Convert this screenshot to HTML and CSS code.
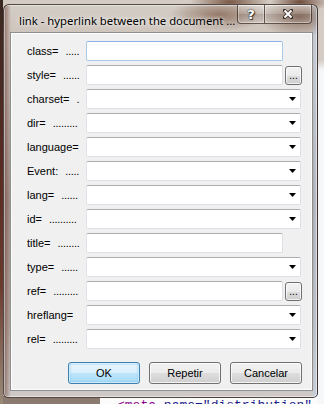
FILE: index.html
```html
<!DOCTYPE html>
<html lang="en">
<head>
    <meta charset="UTF-8">
    <title>link - hyperlink between the document</title>
    <link rel="stylesheet" href="styles.css">
</head>
<body>

<div class="window">
    <div class="titlebar">
        <span class="title">link - hyperlink between the document ...</span>
        <div class="caption-buttons">
            <span class="cap help">?</span>
            <span class="cap close">
                <svg width="10" height="10" viewBox="0 0 10 10">
                    <path d="M1.5 1.5 L8.5 8.5 M8.5 1.5 L1.5 8.5" stroke="#3a2f2a" stroke-width="3.6" stroke-linecap="square"/>
                    <path d="M1.5 1.5 L8.5 8.5 M8.5 1.5 L1.5 8.5" stroke="#fff" stroke-width="2"/>
                </svg>
            </span>
        </div>
    </div>

    <div class="client">
        <div class="form">
            <div class="row"><label>class=<span class="dots">.....</span></label><input class="field focused" type="text"></div>
            <div class="row"><label>style=<span class="dots">......</span></label><input class="field" type="text"><button class="browse">...</button></div>
            <div class="row"><label>charset=<span class="dots">.</span></label><div class="combo"><svg class="arrow" width="7" height="4"><path d="M0 0 H7 L3.5 4 Z" fill="#000"/></svg></div></div>
            <div class="row"><label>dir=<span class="dots">.........</span></label><div class="combo"><svg class="arrow" width="7" height="4"><path d="M0 0 H7 L3.5 4 Z" fill="#000"/></svg></div></div>
            <div class="row"><label>language=</label><div class="combo"><svg class="arrow" width="7" height="4"><path d="M0 0 H7 L3.5 4 Z" fill="#000"/></svg></div></div>
            <div class="row"><label>Event:<span class="dots">.....</span></label><div class="combo"><svg class="arrow" width="7" height="4"><path d="M0 0 H7 L3.5 4 Z" fill="#000"/></svg></div></div>
            <div class="row"><label>lang=<span class="dots">......</span></label><div class="combo"><svg class="arrow" width="7" height="4"><path d="M0 0 H7 L3.5 4 Z" fill="#000"/></svg></div></div>
            <div class="row"><label>id=<span class="dots">..........</span></label><div class="combo"><svg class="arrow" width="7" height="4"><path d="M0 0 H7 L3.5 4 Z" fill="#000"/></svg></div></div>
            <div class="row"><label>title=<span class="dots">........</span></label><input class="field" type="text"></div>
            <div class="row"><label>type=<span class="dots">......</span></label><div class="combo"><svg class="arrow" width="7" height="4"><path d="M0 0 H7 L3.5 4 Z" fill="#000"/></svg></div></div>
            <div class="row"><label>ref=<span class="dots">.........</span></label><input class="field" type="text"><button class="browse">...</button></div>
            <div class="row"><label>hreflang=</label><div class="combo"><svg class="arrow" width="7" height="4"><path d="M0 0 H7 L3.5 4 Z" fill="#000"/></svg></div></div>
            <div class="row"><label>rel=<span class="dots">.........</span></label><div class="combo"><svg class="arrow" width="7" height="4"><path d="M0 0 H7 L3.5 4 Z" fill="#000"/></svg></div></div>
        </div>

        <div class="actions">
            <button class="btn default">OK</button>
            <button class="btn">Repetir</button>
            <button class="btn">Cancelar</button>
        </div>
    </div>
</div>

<div class="editor-line"><span class="tag">&lt;meta</span> <span class="attr">name=</span><span class="str">"distribution"</span></div>

</body>
</html>
```

FILE: styles.css
```css
body {
    margin: 0;
    width: 324px;
    height: 404px;
    overflow: hidden;
    font-family: 'Liberation Sans', Arial, sans-serif;
    background:
        linear-gradient(to bottom, transparent 0, transparent 60px, #f6f7f9 70px, #f6f7f9 100%) right top / 7px 100% no-repeat,
        radial-gradient(ellipse 40px 12px at 230px 2px, #7b5a47, transparent),
        radial-gradient(ellipse 30px 10px at 300px 2px, #6f4c3a, transparent),
        linear-gradient(to bottom, #3a2822 0, #5b2c22 45%, #6a3a2c 70%, #9a8a78 100%) left top / 3px 100% no-repeat,
        linear-gradient(to right, #8a7a70 0, #8a7a70 100px, #fbfbfb 100px) left bottom / 100% 8px no-repeat,
        #d4ccc4;
}
.window {
    margin: 4px 0 0 3px;
    width: 315px;
    height: 394px;
    box-sizing: border-box;
    border: 1px solid rgba(40, 30, 25, 0.75);
    border-radius: 6px 6px 5px 5px;
    padding: 0 4px 6px 6px;
    display: flex;
    flex-direction: column;
    box-shadow: inset 0 0 0 1px rgba(255, 255, 255, 0.45);
    background:
        radial-gradient(ellipse 50px 16px at 215px 10px, rgba(125, 90, 70, 0.75), transparent),
        radial-gradient(ellipse 40px 20px at 295px 12px, rgba(110, 75, 58, 0.7), transparent),
        linear-gradient(to right, rgba(95, 45, 35, 0.55) 0, rgba(95, 45, 35, 0) 7px, transparent calc(100% - 6px), rgba(190, 210, 235, 0.8) 100%),
        linear-gradient(to bottom, #d3ccc5 0, #cec5bd 28px, #a99a93 50%, #b8aba4 80%, #cfcac8 100%);
}
.titlebar {
    height: 27px;
    display: flex;
    align-items: flex-start;
    justify-content: space-between;
}
.title {
    font-family: 'Noto Sans', 'Open Sans', sans-serif;
    font-size: 11.3px;
    white-space: nowrap;
    color: #000;
    margin: 8px 0 0 9px;
    text-shadow: 0 0 6px rgba(255, 255, 255, 0.9), 0 0 3px rgba(255, 255, 255, 0.8);
}
.caption-buttons {
    display: flex;
    flex: none;
    margin-right: 1px;
}
.cap {
    height: 19px;
    box-sizing: border-box;
    display: flex;
    align-items: center;
    justify-content: center;
    border: 1px solid rgba(50, 35, 28, 0.7);
    border-top: none;
    box-shadow: inset 0 0 0 1px rgba(255, 255, 255, 0.35);
    background: linear-gradient(to bottom, rgba(255, 255, 255, 0.25), rgba(255, 255, 255, 0.05) 50%, rgba(0, 0, 0, 0.08) 51%, rgba(255, 255, 255, 0.1));
}
.help {
    width: 27px;
    border-radius: 0 0 0 4px;
    border-right: none;
    font-family: 'DejaVu Sans', sans-serif;
    font-weight: bold;
    font-size: 13px;
    color: #fff;
    text-shadow: 0 0 1px #333, 0 0 2px #333, 1px 1px 1px #333;
}
.close {
    width: 48px;
    border-radius: 0 0 4px 0;
}
.client {
    flex: 1;
    background: #f0f0f0;
    border: 1px solid #8e8f8f;
    box-shadow: inset 0 0 0 1px #fdfdfd;
    padding: 8px 10px 0 16px;
    display: flex;
    flex-direction: column;
}
.form {
    display: flex;
    flex-direction: column;
    gap: 4px;
}
.row {
    display: flex;
    align-items: center;
    height: 20px;
}
.row label {
    width: 59px;
    flex: none;
    white-space: nowrap;
    font-size: 11px;
    color: #000;
}
.dots {
    margin-left: 7px;
    letter-spacing: -0.3px;
}
.field {
    width: 197px;
    height: 20px;
    box-sizing: border-box;
    margin: 0;
    padding: 0 3px;
    border: 1px solid #dbdfe6;
    border-top-color: #abadb3;
    border-left-color: #e2e3ea;
    border-radius: 2px;
    background: #fff;
    font: 11px 'Liberation Sans', Arial, sans-serif;
}
.field.focused {
    border-color: #a7c8e6;
    border-top-color: #8db2e3;
}
.browse {
    width: 17px;
    height: 19px;
    margin: 0 0 0 2px;
    padding: 0 0 3px;
    box-sizing: border-box;
    border: 1px solid #707070;
    border-radius: 3px;
    background: linear-gradient(to bottom, #f2f2f2 0, #ebebeb 50%, #dddddd 51%, #cfcfcf 100%);
    font: 10px 'Liberation Sans', Arial, sans-serif;
    line-height: 1;
    color: #000;
    display: flex;
    align-items: flex-end;
    justify-content: center;
    box-shadow: inset 0 0 0 1px rgba(255, 255, 255, 0.7);
}
.combo {
    width: 215px;
    height: 20px;
    box-sizing: border-box;
    border: 1px solid #dbdfe6;
    border-top-color: #abadb3;
    border-left-color: #e2e3ea;
    border-radius: 2px;
    background: #fff;
    display: flex;
    align-items: center;
    justify-content: flex-end;
    padding-right: 4px;
}
.arrow {
    display: block;
}
.actions {
    display: flex;
    justify-content: flex-end;
    gap: 9px;
    margin-top: 13px;
}
.btn {
    width: 72px;
    height: 22px;
    box-sizing: border-box;
    border: 1px solid #707070;
    border-radius: 3px;
    background: linear-gradient(to bottom, #f2f2f2 0, #ebebeb 50%, #dddddd 51%, #cfcfcf 100%);
    box-shadow: inset 0 0 0 1px rgba(255, 255, 255, 0.75);
    font: 11px 'Liberation Sans', Arial, sans-serif;
    color: #000;
    padding: 0;
}
.btn.default {
    border-color: #3c7fb1;
    background: linear-gradient(to bottom, #eaf6fd 0, #d9f0fc 50%, #bee6fd 51%, #a7d9f5 100%);
    box-shadow: inset 0 0 0 1px rgba(255, 255, 255, 0.6), inset 0 0 2px 1px #7ec4ee;
}
.editor-line {
    margin: 1px 0 0 117px;
    font: 13px 'Liberation Mono', monospace;
    line-height: 13px;
    white-space: pre;
}
.tag {
    color: #8b008b;
}
.attr {
    color: #1a1a8a;
}
.str {
    color: #1a1a8a;
}
```
